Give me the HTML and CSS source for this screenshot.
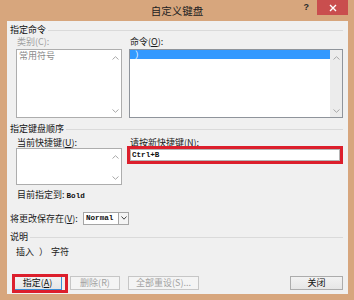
FILE: index.html
```html
<!DOCTYPE html>
<html lang="zh">
<head>
<meta charset="utf-8">
<title>自定义键盘</title>
<link rel="stylesheet" href="styles.css">
</head>
<body>
<div class="window">
  <div class="titlebar">
    <div></div>
    <div class="title">自定义键盘</div>
    <div class="controls">
      <span class="help">?</span>
      <span class="close"><svg width="8" height="8" viewBox="0 0 8 8"><path d="M1 1L7 7M7 1L1 7" stroke="#fff" stroke-width="1.4"/></svg></span>
    </div>
  </div>
  <div class="client">
    <div class="ghead"><span>指定命令</span><i class="gline"></i></div>
    <div class="cols labels">
      <span class="lbl disabled">类别(C):</span>
      <span class="lbl">命令(<u>O</u>):</span>
    </div>
    <div class="cols lists">
      <div class="list list-dis">
        <div class="items"><div class="item gray">常用符号</div></div>
        <div class="sb">
          <svg width="7" height="4" viewBox="0 0 7 4"><path d="M0.5 3.5L3.5 0.7L6.5 3.5" fill="none" stroke="#a8a8a8" stroke-width="1"/></svg>
          <svg width="7" height="4" viewBox="0 0 7 4"><path d="M0.5 0.5L3.5 3.3L6.5 0.5" fill="none" stroke="#a8a8a8" stroke-width="1"/></svg>
        </div>
      </div>
      <div class="list">
        <div class="items"><div class="item sel">）</div></div>
        <div class="sb sb-track">
          <svg width="7" height="4" viewBox="0 0 7 4"><path d="M0.5 3.5L3.5 0.7L6.5 3.5" fill="none" stroke="#a8a8a8" stroke-width="1"/></svg>
          <svg width="7" height="4" viewBox="0 0 7 4"><path d="M0.5 0.5L3.5 3.3L6.5 0.5" fill="none" stroke="#a8a8a8" stroke-width="1"/></svg>
        </div>
      </div>
    </div>
    <div class="ghead ghead2"><span>指定键盘顺序</span><i class="gline"></i></div>
    <div class="cols labels labels2">
      <span class="lbl">当前快捷键(<u>U</u>):</span>
      <span class="lbl">请按新快捷键(<u>N</u>):</span>
    </div>
    <div class="cols row2">
      <div class="list list3">
        <div class="items"></div>
        <div class="sb">
          <svg width="7" height="4" viewBox="0 0 7 4"><path d="M0.5 3.5L3.5 0.7L6.5 3.5" fill="none" stroke="#a8a8a8" stroke-width="1"/></svg>
          <svg width="7" height="4" viewBox="0 0 7 4"><path d="M0.5 0.5L3.5 3.3L6.5 0.5" fill="none" stroke="#a8a8a8" stroke-width="1"/></svg>
        </div>
      </div>
      <div class="input"><span class="mono">Ctrl+B</span></div>
    </div>
    <div class="current">目前指定到: <span class="mono">Bold</span></div>
    <div class="saverow">
      <span class="savelbl">将更改保存在(<u>V</u>):</span>
      <div class="dd">
        <span class="dd-text mono">Normal</span>
        <span class="dd-btn"><svg width="6" height="4" viewBox="0 0 6 4"><path d="M0.5 0.5L3 3.2L5.5 0.5" fill="none" stroke="#444" stroke-width="1"/></svg></span>
      </div>
    </div>
    <div class="ghead ghead3"><span>说明</span><i class="gline"></i></div>
    <div class="desc"><span>插入</span><span class="paren">）</span><span>字符</span></div>
    <div class="buttons">
      <button class="btn btn-default">指定(<u>A</u>)</button>
      <button class="btn btn-dis w50">删除(R)</button>
      <button class="btn btn-dis w71">全部重设(S)...</button>
      <button class="btn btn-close">关闭</button>
    </div>
  </div>
</div>
</body>
</html>
```
FILE: styles.css
```css
* { box-sizing: border-box; }
html, body { margin: 0; padding: 0; }
body {
  width: 354px;
  height: 300px;
  background: #d7a67d;
  font-family: "Noto Sans CJK SC", "Noto Sans", sans-serif;
  font-size: 9px;
  color: #1a1a1a;
  overflow: hidden;
}
.window { width: 354px; height: 300px; }
.titlebar {
  height: 21px;
  display: grid;
  grid-template-columns: 1fr auto 1fr;
  align-items: start;
}
.title {
  font-size: 10.5px;
  line-height: 21px;
  color: #222;
}
.controls {
  display: flex;
  justify-content: flex-end;
  align-items: flex-start;
  padding-right: 6px;
}
.help {
  font-family: "Liberation Sans", sans-serif;
  font-weight: bold;
  font-size: 9px;
  line-height: 15px;
  color: #2a2a2a;
  margin-right: 8px;
}
.close {
  width: 31px;
  height: 15px;
  background: #c94e4e;
  display: flex;
  align-items: center;
  justify-content: center;
}
.client {
  margin: 0 6px 0 7px;
  height: 273px;
  background: #f0f0f0;
  padding: 3px 5px 4px 3px;
  display: flex;
  flex-direction: column;
}
.ghead {
  height: 12px;
  line-height: 12px;
  display: flex;
  align-items: center;
  gap: 2px;
  color: #111;
}
.gline { flex: 1; height: 1px; background: #dadada; }
.ghead2 { margin-top: 5px; }
.ghead3 { margin-top: 5px; }
.cols {
  display: grid;
  grid-template-columns: 106px 214px;
  column-gap: 7px;
  padding-left: 6px;
}
.labels { height: 12px; line-height: 12px; }
.labels2 { margin-top: 2px; height: 11px; line-height: 11px; }
.lbl { padding-left: 1px; white-space: nowrap; }
.disabled { color: #a0a0a0; }
.lists { margin-top: 1px; height: 69px; }
.list {
  border: 1px solid #8f949b;
  background: #fff;
  display: flex;
  height: 69px;
}
.list-dis { border-color: #adadad; }
.items { flex: 1; }
.item {
  height: 9px;
  line-height: 9px;
  padding-left: 2px;
  white-space: nowrap;
}
.gray { color: #8a8a8a; padding-left: 2px; margin-top: 1px; }
.sel { background: #3399ff; color: #fff; padding-left: 5px; }
.sb {
  width: 12px;
  display: flex;
  flex-direction: column;
  justify-content: space-between;
  align-items: center;
  padding: 6px 0 4px;
}
.sb-track { background: #ececec; }
.row2 { height: 37px; align-items: start; }
.list3 { height: 37px; border-color: #adadad; }
.input {
  margin: 1px 3px 0 1px;
  height: 12px;
  border: 1px solid #b5b5b5;
  background: #fff;
  outline: 3px solid #dc1f2c;
  display: flex;
  align-items: center;
  padding-left: 1px;
}
.mono {
  font-family: "Liberation Mono", "DejaVu Sans Mono", monospace;
  font-size: 7.6px;
  font-weight: bold;
  color: #111;
}
.current {
  margin-top: 4px;
  height: 12px;
  line-height: 12px;
  padding-left: 7px;
}
.saverow {
  margin-top: 9px;
  height: 16px;
  display: flex;
  align-items: center;
}
.savelbl { width: 73px; white-space: nowrap; }
.dd {
  width: 46px;
  height: 13px;
  border: 1px solid #a5a5a5;
  background: #fff;
  display: flex;
}
.dd-text { flex: 1; line-height: 11px; padding-left: 2px; }
.dd-btn {
  width: 10px;
  border-left: 1px solid #a5a5a5;
  background: #f4f4f4;
  display: flex;
  align-items: center;
  justify-content: center;
}
.desc {
  margin-top: 3px;
  height: 12px;
  line-height: 12px;
  padding-left: 6px;
  display: flex;
}
.paren { margin-left: 5px; margin-right: 3px; }
.buttons {
  margin-top: 18px;
  height: 14px;
  display: flex;
  gap: 8px;
  padding-left: 3px;
}
.btn {
  font-family: "Noto Sans CJK SC", "Noto Sans", sans-serif;
  font-size: 9px;
  line-height: 12px;
  height: 14px;
  padding: 0;
  width: 49px;
  border: 1px solid #acacac;
  background: linear-gradient(#f2f2f2, #e6e6e6);
  color: #111;
  white-space: nowrap;
}
.btn-default {
  position: relative;
  border-color: #3c8fd6;
}
.btn-default::after {
  content: "";
  position: absolute;
  left: -2px;
  right: -7px;
  top: -3px;
  bottom: -4px;
  border: 3px solid #dc1f2c;
}
.btn-dis {
  border-color: #c6c6c6;
  background: #f4f4f4;
  color: #a2a2a2;
}
.w50 { width: 50px; }
.w71 { width: 71px; }
.btn-close { width: 53px; margin-left: auto; }
```
